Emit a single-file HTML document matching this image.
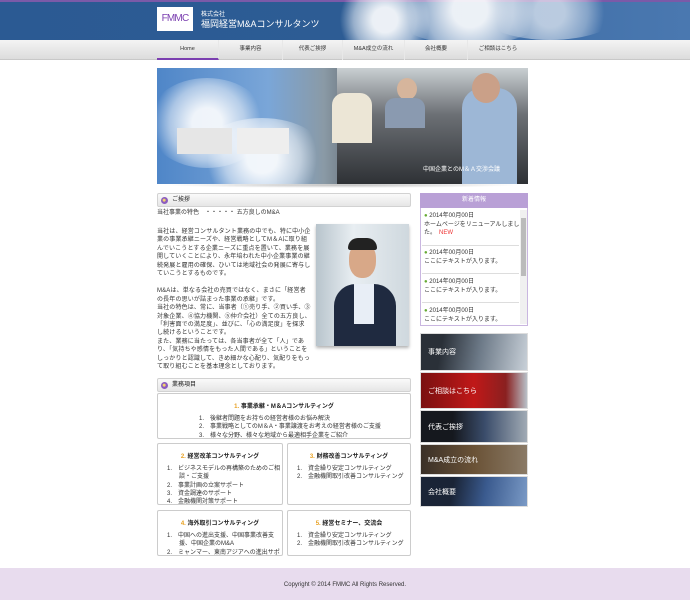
<!DOCTYPE html>
<html><head><meta charset="utf-8"><style>
*{margin:0;padding:0;box-sizing:border-box}
body{width:690px;height:600px;background:#fff;font-family:"Liberation Sans","Noto Sans CJK JP",sans-serif;color:#333;position:relative;overflow:hidden}
.a{position:absolute}
.t{font-size:6px;line-height:7.7px;color:#333;white-space:nowrap}
.hdr{left:0;top:0;width:690px;height:40px;background:linear-gradient(90deg,#2b5a93 0%,#2d5c94 50%,#3a6aa3 55%,#4a78b0 100%);border-top:2px solid #7b5aa8}
.cloud{border-radius:50%;background:radial-gradient(circle,rgba(255,255,255,.9) 20%,rgba(255,255,255,0.5) 50%,rgba(255,255,255,0) 72%)}
.nav{left:0;top:40px;width:690px;height:20px;background:linear-gradient(#f4f4f4,#dcdcdc);border-bottom:1px solid #c8c8c8}
.nav div{position:absolute;top:0;height:20px;line-height:19px;font-size:5.5px;text-align:center;color:#333;border-right:1px solid #e8e8e8}
.sh{height:14px;background:linear-gradient(#fafafa,#e6e6e6);border:1px solid #d2d2d2;border-radius:2px;font-size:6px;line-height:12px;padding-left:14px;color:#222}
.sh:before{content:"";position:absolute;left:3px;top:3px;width:7px;height:7px;border-radius:50%;background:radial-gradient(circle at 45% 45%,#f4d56a 20%,#8b5cc0 35%)}
.bx{border:1px solid #ccc;border-radius:2px;background:#fff}
.bx h4{font-size:6px;text-align:center;font-weight:bold;margin-top:7px;color:#222}
.bx h4 b{color:#e8a020}
.bx .t{line-height:8.3px}
.ban{left:420px;width:108px;border:1px solid #ddd;color:#fff;font-size:7px;padding-left:7px}
</style></head><body>
<div class="a hdr"></div>
<div class="a cloud" style="left:330px;top:-10px;width:110px;height:60px"></div>
<div class="a cloud" style="left:390px;top:-25px;width:160px;height:70px"></div>
<div class="a cloud" style="left:480px;top:-15px;width:140px;height:55px;opacity:.7"></div>
<div class="a" style="left:157px;top:7px;width:36px;height:24px;background:#fff;color:#7b3fb0;font-size:10px;line-height:24px;text-align:center;letter-spacing:-0.8px">FMMC</div>
<div class="a" style="left:201px;top:9px;font-size:6px;color:#fff">株式会社</div>
<div class="a" style="left:201px;top:17px;font-size:9px;color:#fff;white-space:nowrap">福岡経営M&amp;Aコンサルタンツ</div>
<div class="a nav">
<div style="left:157px;width:62px;border-bottom:2px solid #7b3fb0">Home</div>
<div style="left:219px;width:64px">事業内容</div>
<div style="left:283px;width:60px">代表ご挨拶</div>
<div style="left:343px;width:62px">M&amp;A成立の流れ</div>
<div style="left:405px;width:63px">会社概要</div>
<div style="left:468px;width:60px;border:0">ご相談はこちら</div>
</div>
<!-- banner -->
<div class="a" style="left:160px;top:182px;width:362px;height:6px;background:radial-gradient(ellipse,rgba(0,0,0,.25),rgba(0,0,0,0) 70%)"></div>
<div class="a" style="left:157px;top:68px;width:371px;height:116px;overflow:hidden;background:linear-gradient(90deg,#4f86c8 0%,#7aa6d8 30%,#8a9aa6 45%,#4a4f55 60%,#3a3e44 100%)">
<div class="a cloud" style="left:-10px;top:10px;width:120px;height:90px"></div>
<div class="a cloud" style="left:40px;top:50px;width:130px;height:80px"></div>
<div class="a" style="left:180px;top:0;width:191px;height:116px;background:linear-gradient(#c9cfd2,#6c7075 40%,#2e3135)"></div>
<div class="a" style="left:305px;top:20px;width:55px;height:96px;background:#9db7d6;border-radius:20px 20px 0 0"></div>
<div class="a" style="left:315px;top:5px;width:28px;height:30px;background:#caa088;border-radius:50%"></div>
<div class="a" style="left:240px;top:10px;width:20px;height:22px;background:#d6b59c;border-radius:50%"></div>
<div class="a" style="left:175px;top:25px;width:40px;height:50px;background:#ece6d6;border-radius:12px 12px 0 0"></div>
<div class="a" style="left:228px;top:30px;width:40px;height:30px;background:#8a9ab0;border-radius:10px 10px 0 0"></div>
<div class="a" style="left:20px;top:60px;width:55px;height:26px;background:#e6e6e6"></div>
<div class="a" style="left:80px;top:60px;width:52px;height:26px;background:#eee"></div>
<div class="a" style="left:266px;top:96px;font-size:6px;color:#fff">中国企業とのM＆Ａ交渉会議</div>
</div>
<!-- left -->
<div class="a sh" style="left:157px;top:193px;width:254px">ご挨拶</div>
<div class="a t" style="left:157px;top:210px">当社事業の特色　・・・・・ 五方良しのM&amp;A</div>
<div class="a t" style="left:157px;top:228px;line-height:8.45px;letter-spacing:0.15px">当社は、経営コンサルタント業務の中でも、特に中小企<br>業の事業承継ニーズや、経営戦略としてM＆Aに取り組<br>んでいこうとする企業ニーズに重点を置いて、業務を展<br>開していくことにより、永年培われた中小企業事業の継<br>続発展と雇用の確保、ひいては地域社会の発展に寄与し<br>ていこうとするものです。<br><br>M&amp;Aは、単なる会社の売買ではなく、まさに「経営者<br>の長年の思いが詰まった事業の承継」です。<br>当社の特色は、常に、当事者（①売り手、②買い手、③<br>対象企業、④協力機関、⑤仲介会社）全ての五方良し、<br>「利害面での満足度」、並びに、「心の満足度」を探求<br>し続けるということです。<br>また、業務に当たっては、各当事者が全て「人」であ<br>り、「気持ちや感情をもった人間である」ということを<br>しっかりと認識して、きめ細かな心配り、気配りをもっ<br>て取り組むことを基本理念としております。</div>
<div class="a" style="left:316px;top:224px;width:93px;height:122px;background:linear-gradient(90deg,#b8c4cc,#e8eef2 40%,#cfd8de);box-shadow:0 2px 3px rgba(0,0,0,.3);overflow:hidden">
<div class="a" style="left:18px;top:60px;width:62px;height:62px;background:#1f2a40;border-radius:22px 22px 0 0"></div>
<div class="a" style="left:38px;top:60px;width:20px;height:40px;background:#e8eef6"></div>
<div class="a" style="left:33px;top:18px;width:27px;height:36px;background:#d8a888;border-radius:45%"></div>
<div class="a" style="left:32px;top:14px;width:29px;height:12px;background:#222;border-radius:14px 14px 3px 3px"></div>
</div>
<div class="a sh" style="left:157px;top:378px;width:254px">業務項目</div>
<div class="a bx" style="left:157px;top:393px;width:254px;height:46px"><h4><b>1.</b> 事業承継・M＆Aコンサルティング</h4>
<div class="t" style="margin:5px 0 0 41px">1.　後継者問題をお持ちの経営者様のお悩み解決<br>2.　事業戦略としてのM＆A・事業譲渡をお考えの経営者様のご支援<br>3.　様々な分野、様々な地域から最適相手企業をご紹介</div></div>
<div class="a bx" style="left:157px;top:443px;width:126px;height:62px;overflow:hidden"><h4><b>2.</b> 経営改革コンサルティング</h4>
<div class="t" style="margin:5px 0 0 9px">1.　ビジネスモデルの再構築のためのご相<br>　　談・ご支援<br>2.　事業計画の立案サポート<br>3.　資金調達のサポート<br>4.　金融機関対策サポート</div></div>
<div class="a bx" style="left:287px;top:443px;width:124px;height:62px"><h4><b>3.</b> 財務改善コンサルティング</h4>
<div class="t" style="margin:5px 0 0 9px">1.　資金繰り安定コンサルティング<br>2.　金融機関取引改善コンサルティング</div></div>
<div class="a bx" style="left:157px;top:510px;width:126px;height:46px;overflow:hidden"><h4><b>4.</b> 海外取引コンサルティング</h4>
<div class="t" style="margin:5px 0 0 9px">1.　中国への進出支援、中国事業改善支<br>　　援、中国企業のM&amp;A<br>2.　ミャンマー、東南アジアへの進出サポ</div></div>
<div class="a bx" style="left:287px;top:510px;width:124px;height:46px"><h4><b>5.</b> 経営セミナー、交流会</h4>
<div class="t" style="margin:5px 0 0 9px">1.　資金繰り安定コンサルティング<br>2.　金融機関取引改善コンサルティング</div></div>
<!-- right -->
<div class="a" style="left:420px;top:193px;width:108px;height:133px;border:1px solid #c9b6e0;background:#fff"></div>
<div class="a" style="left:420px;top:193px;width:108px;height:15px;background:#b9a0d6;color:#fff;font-size:6px;text-align:center;line-height:15px">新着情報</div>
<div class="a" style="left:520px;top:210px;width:7px;height:114px;background:#f0f0f0"></div>
<div class="a" style="left:521px;top:218px;width:5px;height:58px;background:#bbb"></div>
<div class="a t" style="left:424px;top:212px;line-height:8.5px"><span style="color:#6a3">●</span> 2014年00月00日<br>ホームページをリニューアルしまし<br>た。　<span style="color:#e33">NEW</span></div>
<div class="a" style="left:422px;top:245px;width:97px;height:1px;background:#ddd"></div>
<div class="a t" style="left:424px;top:249px;line-height:8.5px"><span style="color:#6a3">●</span> 2014年00月00日<br>ここにテキストが入ります。</div>
<div class="a" style="left:422px;top:273px;width:97px;height:1px;background:#ddd"></div>
<div class="a t" style="left:424px;top:278px;line-height:8.5px"><span style="color:#6a3">●</span> 2014年00月00日<br>ここにテキストが入ります。</div>
<div class="a" style="left:422px;top:302px;width:97px;height:1px;background:#ddd"></div>
<div class="a t" style="left:424px;top:307px;line-height:8.5px;height:16px;overflow:hidden"><span style="color:#6a3">●</span> 2014年00月00日<br>ここにテキストが入ります。</div>
<div class="a ban" style="top:333px;height:38px;line-height:38px;background:linear-gradient(100deg,#2a3038 20%,#6d7a88 55%,#c8d0d8)">事業内容</div>
<div class="a ban" style="top:372px;height:37px;line-height:37px;background:linear-gradient(90deg,#7a1010,#c01818 50%,#8a2020 80%,#b8c0c8)">ご相談はこちら</div>
<div class="a ban" style="top:410px;height:33px;line-height:33px;background:linear-gradient(90deg,#15181e 30%,#3a4c6a 60%,#a0aab4)">代表ご挨拶</div>
<div class="a ban" style="top:444px;height:31px;line-height:31px;background:linear-gradient(90deg,#3a3028,#6a5236 50%,#8a7a66)">M&amp;A成立の流れ</div>
<div class="a ban" style="top:476px;height:31px;line-height:31px;background:linear-gradient(100deg,#1a2436 30%,#3a5a8e 60%,#7a9ac6)">会社概要</div>
<!-- footer -->
<div class="a" style="left:0;top:568px;width:690px;height:32px;background:#e8dcee;font-size:6px;text-align:center;line-height:34px;color:#333">Copyright © 2014 FMMC All Rights Reserved.</div>
</body></html>
